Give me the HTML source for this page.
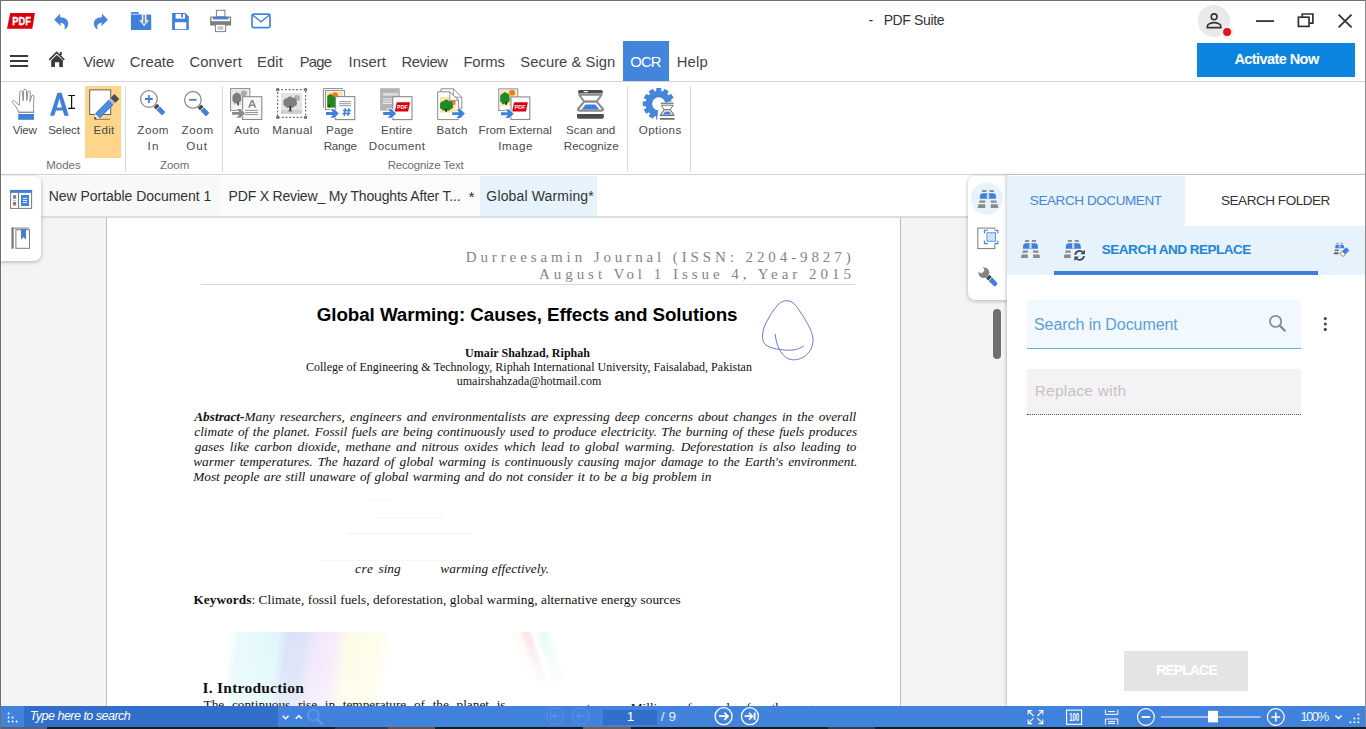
<!DOCTYPE html>
<html>
<head>
<meta charset="utf-8">
<title>PDF Suite</title>
<style>
*{box-sizing:border-box;margin:0;padding:0}
html,body{width:1366px;height:729px;overflow:hidden;background:#fff;font-family:"Liberation Sans",sans-serif;color:#333}
.a{position:absolute;white-space:nowrap}
svg{position:absolute;overflow:visible}
#win{position:absolute;left:0;top:0;width:1366px;height:729px;overflow:hidden;background:#fff}
.hl{position:absolute;height:1px;background:#d4d4d4}
.vl{position:absolute;width:1px;background:#dadada}
.m{color:#444}
.r{color:#4a4a4a}
.g{color:#6e6e6e}
.tb{color:#333}
.w{color:#fff}
.b{font-weight:bold}
.i{font-style:italic}
.ser{font-family:"Liberation Serif",serif;color:#111}
.hd{color:#848484}
.blue{color:#3b7dd8}
</style>
</head>
<body>
<div id="win">

<!-- ===== title bar ===== -->
<div id="titlebar" class="a" style="left:0;top:0;width:1366px;height:41px;background:#fff"></div>
<div class="a tb" style="left:868.45px;top:13.15px;font-size:14px;line-height:14px;">-</div>
<div class="a tb" style="left:883.65px;top:13.15px;font-size:14px;line-height:14px;letter-spacing:-0.362px;">PDF Suite</div>
<!--TITLEICONS_BEGIN-->
<svg style="left:0;top:0" width="1366" height="82" viewBox="0 0 1366 82">
<!-- PDF logo -->
<path d="M10.2,13 H34.9 L32.3,28.8 H7 Z" fill="#d9000d"/>
<text x="12.3" y="24.5" font-family="Liberation Sans" font-weight="bold" font-size="10" fill="#fff" stroke="#fff" stroke-width="0.3" textLength="18.6" lengthAdjust="spacingAndGlyphs">PDF</text>
<!-- undo / redo -->
<path id="undo" d="M54.2,19.8 L60,13.8 L60.3,17.3 C65.5,17.2 68.6,20.4 68.2,24.2 C68,26.6 66.6,28.4 64.3,29.6 C65.7,25.8 64.4,22.9 60.4,22.7 L60.8,26.3 Z" fill="#4585dc"/>
<use href="#undo" transform="translate(162.1,0) scale(-1,1)"/>
<!-- folder -->
<path d="M130.9,12.9 q0,-1 1,-1 h5.6 q1,0 1.4,0.9 l0.3,0.9 h-8.3z" fill="#3e80dc"/>
<path d="M130.9,14.6 h19.3 q1,0 1,1 v13.3 q0,1 -1,1 h-18.3 q-1,0 -1,-1z" fill="#3e80dc"/>
<path d="M141.8,13.6 h4.6 v6.6 h2.6 l-4.9,6 l-4.9,-6 h2.6z" fill="#f2f2f2"/>
<path d="M143.3,14.8 h1.6 v6.8 h1.4 l-2.2,2.9 l-2.2,-2.9 h1.4z" fill="#7f8a96"/>
<!-- save -->
<path d="M172.1,13.1 h13.2 l3.5,3.5 v13.3 h-16.7z" fill="#3e80dc"/>
<rect x="175.6" y="14" width="9.4" height="4.6" fill="#fff"/>
<rect x="181.2" y="14" width="1.8" height="3.4" fill="#3e80dc"/>
<rect x="174.9" y="22.2" width="11.4" height="7" fill="#fff"/>
<!-- printer -->
<rect x="216.4" y="10.3" width="8.5" height="6.5" fill="#fff" stroke="#7e7e7e" stroke-width="1"/>
<path d="M210.1,17.6 q0,-1.1 1.1,-1.1 h18.8 q1.1,0 1.1,1.1 v8 h-21z" fill="#7e7e7e"/>
<rect x="211.4" y="17.6" width="18.4" height="3.6" fill="#fff"/>
<rect x="212.9" y="16.9" width="15.4" height="2.5" fill="#3e80dc"/>
<rect x="215.4" y="24.3" width="10.2" height="7.3" fill="#fff" stroke="#7e7e7e" stroke-width="1"/>
<path d="M217.6,27 h5.8 M217.6,29 h5.8" stroke="#7e7e7e" stroke-width="0.8"/>
<!-- mail -->
<rect x="252" y="14.1" width="18" height="13.5" rx="1.6" fill="none" stroke="#4585dc" stroke-width="1.7"/>
<path d="M252.6,15 L261,21.8 L269.4,15" fill="none" stroke="#4585dc" stroke-width="1.5"/>
<!-- user -->
<circle cx="1214" cy="20.9" r="16" fill="#e9e9e9"/>
<circle cx="1214.1" cy="16.8" r="2.9" fill="none" stroke="#333" stroke-width="1.6"/>
<path d="M1207.3,27.6 v-1.4 c0,-2.4 4.5,-3.6 6.8,-3.6 c2.3,0 6.8,1.2 6.8,3.6 v1.4z" fill="none" stroke="#333" stroke-width="1.6"/>
<circle cx="1227.1" cy="31.9" r="6.3" fill="#f1f1f1"/>
<circle cx="1227.1" cy="31.9" r="4" fill="#e8111b"/>
<!-- window controls -->
<path d="M1256,21.1 h18" stroke="#333" stroke-width="1.8"/>
<rect x="1298.4" y="17.2" width="10.6" height="9.2" fill="none" stroke="#333" stroke-width="1.7"/>
<path d="M1302.3,17 v-3 h10.6 v9.2 h-3.6" fill="none" stroke="#333" stroke-width="1.7"/>
<path d="M1338.6,14.6 l13,12.8 M1351.6,14.6 l-13,12.8" stroke="#333" stroke-width="1.8"/>
<!-- hamburger -->
<path d="M10,56 h18.1 M10,61 h18.1 M10,66.1 h18.1" stroke="#3a3a3a" stroke-width="2"/>
<!-- home -->
<path d="M49.2,59.9 L56.7,52.4 L64.3,59.9" fill="none" stroke="#3a3a3a" stroke-width="1.5"/>
<path d="M51.2,60.2 L56.7,54.9 L62.9,60.2 V67 H59.2 V62.2 H55 V67 H51.2z" fill="#3a3a3a"/>
<rect x="59.9" y="52" width="1.9" height="3" fill="#3a3a3a"/>
</svg>
<!--TITLEICONS_END-->

<!-- ===== menu bar ===== -->
<div class="a" style="left:623px;top:41px;width:46px;height:40px;background:#4485dc"></div>
<div class="a m" style="left:83.25px;top:54.67px;font-size:14.8px;line-height:14.8px;letter-spacing:-0.233px;">View</div>
<div class="a m" style="left:129.85px;top:54.67px;font-size:14.8px;line-height:14.8px;letter-spacing:-0.020px;">Create</div>
<div class="a m" style="left:189.45px;top:54.67px;font-size:14.8px;line-height:14.8px;letter-spacing:0.083px;">Convert</div>
<div class="a m" style="left:257.10px;top:54.67px;font-size:14.8px;line-height:14.8px;letter-spacing:0.067px;">Edit</div>
<div class="a m" style="left:299.65px;top:54.67px;font-size:14.8px;line-height:14.8px;letter-spacing:-0.700px;">Page</div>
<div class="a m" style="left:348.55px;top:54.67px;font-size:14.8px;line-height:14.8px;letter-spacing:0.060px;">Insert</div>
<div class="a m" style="left:401.55px;top:54.67px;font-size:14.8px;line-height:14.8px;letter-spacing:-0.420px;">Review</div>
<div class="a m" style="left:463.45px;top:54.67px;font-size:14.8px;line-height:14.8px;letter-spacing:-0.125px;">Forms</div>
<div class="a m" style="left:520.30px;top:54.67px;font-size:14.8px;line-height:14.8px;letter-spacing:0.033px;">Secure &amp; Sign</div>
<div class="a w" style="left:630.25px;top:54.67px;font-size:14.8px;line-height:14.8px;letter-spacing:-0.850px;">OCR</div>
<div class="a m" style="left:676.65px;top:54.67px;font-size:14.8px;line-height:14.8px;letter-spacing:0.233px;">Help</div>
<div class="a" style="left:1197px;top:43px;width:158px;height:34px;background:#0b84e0"></div>
<div class="a w b" style="left:1234.45px;top:52.23px;font-size:14.5px;line-height:14.5px;letter-spacing:-0.573px;">Activate Now</div>
<div class="hl" style="left:0;top:81px;width:1366px"></div>

<!-- ===== ribbon ===== -->
<div class="a" style="left:85px;top:86px;width:36px;height:72px;background:#fdd68b"></div>
<div class="vl" style="left:125px;top:86px;height:86px"></div>
<div class="vl" style="left:222px;top:86px;height:86px"></div>
<div class="vl" style="left:627px;top:86px;height:86px"></div>
<div class="vl" style="left:690px;top:86px;height:86px"></div>
<div class="a r" style="left:12.65px;top:123.98px;font-size:11.6px;line-height:11.6px;letter-spacing:-0.233px;">View</div>
<div class="a r" style="left:48.15px;top:123.98px;font-size:11.6px;line-height:11.6px;letter-spacing:-0.060px;">Select</div>
<div class="a r" style="left:93.55px;top:123.98px;font-size:11.6px;line-height:11.6px;letter-spacing:0.233px;">Edit</div>
<div class="a r" style="left:137.30px;top:123.98px;font-size:11.6px;line-height:11.6px;letter-spacing:0.533px;">Zoom</div>
<div class="a r" style="left:147.55px;top:140.38px;font-size:11.6px;line-height:11.6px;letter-spacing:1.300px;">In</div>
<div class="a r" style="left:181.50px;top:123.98px;font-size:11.6px;line-height:11.6px;letter-spacing:0.667px;">Zoom</div>
<div class="a r" style="left:186.25px;top:140.38px;font-size:11.6px;line-height:11.6px;letter-spacing:1.050px;">Out</div>
<div class="a r" style="left:234.35px;top:123.98px;font-size:11.6px;line-height:11.6px;letter-spacing:0.433px;">Auto</div>
<div class="a r" style="left:272.25px;top:123.98px;font-size:11.6px;line-height:11.6px;letter-spacing:0.420px;">Manual</div>
<div class="a r" style="left:326.10px;top:123.98px;font-size:11.6px;line-height:11.6px;letter-spacing:0.133px;">Page</div>
<div class="a r" style="left:323.70px;top:140.38px;font-size:11.6px;line-height:11.6px;letter-spacing:-0.250px;">Range</div>
<div class="a r" style="left:381.10px;top:123.98px;font-size:11.6px;line-height:11.6px;letter-spacing:0.160px;">Entire</div>
<div class="a r" style="left:368.85px;top:140.38px;font-size:11.6px;line-height:11.6px;letter-spacing:0.471px;">Document</div>
<div class="a r" style="left:436.55px;top:123.98px;font-size:11.6px;line-height:11.6px;letter-spacing:0.325px;">Batch</div>
<div class="a r" style="left:478.50px;top:123.98px;font-size:11.6px;line-height:11.6px;letter-spacing:0.050px;">From External</div>
<div class="a r" style="left:498.20px;top:140.38px;font-size:11.6px;line-height:11.6px;letter-spacing:0.500px;">Image</div>
<div class="a r" style="left:566.10px;top:123.98px;font-size:11.6px;line-height:11.6px;letter-spacing:0.029px;">Scan and</div>
<div class="a r" style="left:563.80px;top:140.38px;font-size:11.6px;line-height:11.6px;letter-spacing:0.000px;">Recognize</div>
<div class="a r" style="left:638.75px;top:123.98px;font-size:11.6px;line-height:11.6px;letter-spacing:0.417px;">Options</div>
<div class="a g" style="left:46.15px;top:159.87px;font-size:11.5px;line-height:11.5px;letter-spacing:0.025px;">Modes</div>
<div class="a g" style="left:159.95px;top:159.87px;font-size:11.5px;line-height:11.5px;letter-spacing:-0.033px;">Zoom</div>
<div class="a g" style="left:387.65px;top:159.87px;font-size:11.5px;line-height:11.5px;letter-spacing:-0.177px;">Recognize Text</div>
<!--RIBBONICONS_BEGIN-->
<svg style="left:0;top:82px" width="700" height="92" viewBox="0 82 700 92">
<defs>
<path id="barrow" d="M0,-1.45 H6.4 L4,-4.3 H7.7 L11.7,0 L7.7,4.3 H4 L6.4,1.45 H0z" paint-order="stroke"/>
<g id="scan">
<path d="M1.1,3.5 V1.6 Q1.1,0 2.7,0 H24.2 Q25.8,0 25.8,1.6 V3.5z" fill="#4d4d4d"/>
<rect x="6.6" y="1" width="4.4" height="1.2" rx="0.6" fill="#fff"/>
<path d="M2.2,4.9 H24.7 L19.6,11.6 H7.2z" fill="#fff" stroke="#8c8c8c" stroke-width="1.8" stroke-linejoin="round"/>
<path d="M7.2,11.6 H19.6 L25.9,19 Q26.3,20.6 24.6,20.6 H2.3 Q0.6,20.6 1,19z" fill="#fff" stroke="#8c8c8c" stroke-width="2.1" stroke-linejoin="round"/>
<path d="M8.6,14.4 H18.3 L22.3,19.4 H4.6z" fill="#3e80dc"/>
<path d="M0,23.9 H26.8 V27 Q26.8,28.7 25.1,28.7 H1.7 Q0,28.7 0,27z" fill="#4d4d4d"/>
</g>
<g id="pdfb"><path d="M1.9,0 H15.2 L13.3,9.2 H0z" fill="#d9000d"/><text x="2.3" y="6.7" font-family="Liberation Sans" font-weight="bold" font-size="5.6" fill="#fff" textLength="10.6" lengthAdjust="spacingAndGlyphs">PDF</text></g>
<path id="tree" d="M0,6 C-1,3 1,0.5 3.4,0.8 C4.5,-1.2 7.6,-1.4 8.8,0.4 C11.4,0 13.4,2.2 12.6,4.6 C14,6.4 12.8,9.2 10.4,9.2 C9.6,10.8 7.6,11.2 6.4,10.4 C4.6,11.6 2,10.8 1.6,9 C0,8.8 -0.8,7.2 0,6z"/>
</defs>
<!-- hand (View) -->
<path d="M18.6,112.2 C17.8,108.6 14.2,104.6 12.4,102.6 C11.6,101.4 13,100.2 14.4,101 L19.3,105.2 L19.8,92.2 C19.9,90.4 22.2,90.4 22.4,92.2 L23.2,100.6 L23.6,90.6 C23.7,88.7 26.3,88.7 26.4,90.6 L26.8,100.6 L27.8,92.2 C28,90.4 30.4,90.6 30.3,92.4 L30,101.6 L31.6,96 C32.1,94.4 34.2,94.8 34,96.6 C33.4,101.4 33.6,107.6 33.6,112.2z" fill="#fff" stroke="#8e8e8e" stroke-width="1" stroke-linejoin="round"/>
<path d="M18.2,112.4 H34" stroke="#8a8a8a" stroke-width="0.9"/>
<rect x="18.2" y="114" width="15.8" height="5.8" fill="#3e80dc"/>
<!-- A + I-beam (Select) -->
<path fill-rule="evenodd" d="M50,115.8 L57.5,92.8 H61.6 L68.8,115.8 H64.4 L62.8,110.6 H55.9 L54.3,115.8z M56.9,107.4 H61.8 L59.4,98.6z" fill="#3e80dc"/>
<path d="M68.2,95.5 H75 M68.2,108.4 H75 M71.6,95.5 V108.4" stroke="#111" stroke-width="1.2" fill="none"/>
<!-- Edit -->
<rect x="89.7" y="89.9" width="21" height="24.6" fill="#fff" stroke="#5f5f5f" stroke-width="1"/>
<path d="M94.3,119.3 H110.2" stroke="#5f5f5f" stroke-width="0.8"/>
<g transform="translate(94.2,119.1) rotate(-45)">
<path d="M0,0 L4.6,-3.4 V3.4z" fill="#f3e9d8"/>
<path d="M0,0 L2.2,-1.6 V1.6z" fill="#333"/>
<rect x="4.6" y="-3.4" width="19.2" height="6.8" fill="#3e80dc"/>
<path d="M5,-1.2 H23.6 M5,1.2 H23.6" stroke="#a9c8f2" stroke-width="0.5"/>
<rect x="23.8" y="-3.4" width="2.8" height="6.8" fill="#b9b9b9"/>
<rect x="26.6" y="-3.4" width="5.4" height="6.8" fill="#4d4d4d"/>
</g>
<!-- Zoom in / out -->
<g id="mag" transform="translate(148.9,99) rotate(45)">
<rect x="9.2" y="-2.45" width="3.3" height="4.9" fill="#444"/>
<path d="M13.2,-2.45 H20 Q21,-2.45 21,-1.45 V1.45 Q21,2.45 20,2.45 H13.2z" fill="#3e80dc"/>
</g>
<circle cx="148.9" cy="99" r="8.3" fill="#fff" stroke="#8c8c8c" stroke-width="1.3"/>
<path d="M145,99 H152.8 M148.9,95.1 V102.9" stroke="#3e80dc" stroke-width="1.8"/>
<use href="#mag" transform="translate(44,0.8)"/>
<circle cx="192.9" cy="99.8" r="8.3" fill="#fff" stroke="#8c8c8c" stroke-width="1.3"/>
<path d="M189.1,99.8 H196.7" stroke="#3e80dc" stroke-width="1.8"/>
<!-- Auto -->
<rect x="230.6" y="88.6" width="19.2" height="22" fill="#f4f4f4" stroke="#8a8a8a" stroke-width="1"/>
<rect x="232.2" y="90.2" width="16" height="14.5" fill="#e3e3e3"/>
<circle cx="243.9" cy="93.3" r="2.9" fill="#a9a9a9"/>
<use href="#tree" transform="translate(232.6,93.2) scale(0.66,0.95)" fill="#7b7b7b"/>
<rect x="237.4" y="102.4" width="1.4" height="3" fill="#333"/>
<rect x="242.6" y="96.7" width="19.2" height="22.8" fill="#f8f8f8" stroke="#8a8a8a" stroke-width="1.1"/>
<path fill-rule="evenodd" d="M248,107.7 L251.2,100.1 H253.2 L256.4,107.7 H254.6 L253.9,105.9 H250.5 L249.8,107.7z M251,104.5 H253.4 L252.2,101.7z" fill="#8a8a8a"/>
<path d="M245.1,110.4 H258 M245.1,112.5 H258 M245.1,114.5 H258" stroke="#8a8a8a" stroke-width="0.9"/>
<use href="#barrow" transform="translate(232.1,113.4) scale(1.11,1)" fill="#8a8a8a" stroke="#fff" stroke-width="1.3"/>
<!-- Manual -->
<rect x="277.6" y="89.6" width="28" height="27.8" fill="#fff" stroke="#6e6e6e" stroke-width="1.2" stroke-dasharray="1.9,1.8"/>
<rect x="276.1" y="88.1" width="3" height="3" fill="#7a7a7a"/><rect x="304.1" y="88.1" width="3" height="3" fill="#7a7a7a"/>
<rect x="276.1" y="115.9" width="3" height="3" fill="#7a7a7a"/><rect x="304.1" y="115.9" width="3" height="3" fill="#7a7a7a"/>
<rect x="281" y="92.9" width="20.9" height="20.9" fill="#e4e4e4"/>
<rect x="281" y="110" width="20.9" height="3.8" fill="#cfcfcf"/>
<circle cx="297" cy="98" r="3" fill="#b3b3b3"/>
<use href="#tree" transform="translate(283.6,97.4) scale(1.02,0.95)" fill="#7e7e7e"/>
<path d="M289.6,106 h1.4 l0.3,4.4 l1.6,0.9 h-5.2 l1.6,-0.9z" fill="#333"/>
<!-- Page Range -->
<path d="M323.4,107.8 V88.6 H343" fill="none" stroke="#8a8a8a" stroke-width="1"/>
<rect x="325.4" y="90.6" width="19.2" height="19" fill="#fff" stroke="#8a8a8a" stroke-width="1"/>
<rect x="326.9" y="92" width="16.3" height="15.8" fill="#fbe3a4"/>
<circle cx="335" cy="95.2" r="3" fill="#f07a26"/>
<path d="M327.2,107.4 V96 L330.4,93.8 L336.2,98.6 V107.4z" fill="#1f8a22"/>
<rect x="328.6" y="104.6" width="1.3" height="2.8" fill="#222"/>
<rect x="335.6" y="96.6" width="19.2" height="23" fill="#fff" stroke="#8a8a8a" stroke-width="1.1"/>
<path d="M339.1,101.6 H350.9 M339.1,103.7 H350.9 M339.1,105.7 H350.9" stroke="#8a8a8a" stroke-width="0.9"/>
<path d="M345.4,108.2 L344.2,115.8 M349,108.2 L347.8,115.8 M342.9,110.6 H350.9 M342.4,113.4 H350.4" stroke="#3e80dc" stroke-width="1.5"/>
<use href="#barrow" transform="translate(326,113.5) scale(1.09,1)" fill="#3e80dc" stroke="#fff" stroke-width="1.3"/>
<!-- Entire Document -->
<rect x="380.1" y="88.2" width="19.7" height="22.5" fill="#b3b3b3"/>
<rect x="382.8" y="92.8" width="15.4" height="2.9" fill="#e6e6e6"/>
<path d="M382.8,93.5 H398.2 M382.8,94.9 H398.2" stroke="#b3b3b3" stroke-width="0.5" stroke-dasharray="0.8,0.8"/>
<path d="M382.8,99 H392 M382.8,101.2 H392 M382.8,103.4 H392" stroke="#f2f2f2" stroke-width="1"/>
<rect x="392.8" y="96.7" width="19.2" height="22.9" fill="#fff" stroke="#8a8a8a" stroke-width="1.1"/>
<use href="#pdfb" transform="translate(394.8,102.3)"/>
<use href="#barrow" transform="translate(383.2,113.5) scale(1.1,1)" fill="#3e80dc" stroke="#fff" stroke-width="1.3"/>
<!-- Batch -->
<path d="M441,108.2 V88.8 H453.4 L461.8,97.2 V108.2z" fill="#fff" stroke="#8a8a8a" stroke-width="1"/>
<path d="M453.4,88.8 V97.2 H461.8" fill="none" stroke="#8a8a8a" stroke-width="0.9"/>
<path d="M437.7,119.6 V91.8 H449.8 L458.6,100.4 V119.6z" fill="#fff" stroke="#8a8a8a" stroke-width="1"/>
<rect x="440" y="96.9" width="15.8" height="15.7" fill="#fbe3a4"/>
<circle cx="453" cy="102.4" r="2.6" fill="#f07a26"/>
<path d="M449.8,91.8 V100.4 H458.6z" fill="#fff" stroke="#8a8a8a" stroke-width="0.9" stroke-linejoin="round"/>
<use href="#tree" transform="translate(440.2,100.6) scale(0.98,0.93)" fill="#1f8a22"/>
<rect x="445.5" y="108.6" width="1.4" height="3.4" fill="#222"/>
<use href="#barrow" transform="translate(452.1,113.6) scale(1.09,1)" fill="#3e80dc" stroke="#fff" stroke-width="1.3"/>
<!-- From External Image -->
<rect x="498.8" y="88.9" width="19" height="21.7" fill="#fff" stroke="#8a8a8a" stroke-width="1"/>
<rect x="500.2" y="90.2" width="16.3" height="15.5" fill="#fbe3a4"/>
<circle cx="512.1" cy="92.7" r="2.9" fill="#f07a26"/>
<use href="#tree" transform="translate(500.3,93) scale(0.72,1.02)" fill="#1f8a22"/>
<rect x="505.4" y="101.8" width="1.3" height="3.2" fill="#222"/>
<rect x="511" y="96.9" width="18.8" height="22.6" fill="#fff" stroke="#8a8a8a" stroke-width="1.1"/>
<use href="#pdfb" transform="translate(512.2,102.3) scale(1.03,0.99)"/>
<use href="#barrow" transform="translate(501,113.7) scale(1.09,1)" fill="#3e80dc" stroke="#fff" stroke-width="1.3"/>
<!-- Scan and Recognize -->
<use href="#scan" transform="translate(577,90)"/>
<!-- Options -->
<g transform="translate(658.7,103.8)">
<g fill="#4585dc">
<path fill-rule="evenodd" d="M13.1,0 A13.1,13.1 0 1 1 -13.1,0 A13.1,13.1 0 1 1 13.1,0z M6.6,0 A6.6,6.6 0 1 0 -6.6,0 A6.6,6.6 0 1 0 6.6,0z"/>
<g id="tooth"><rect x="-2.5" y="-15.9" width="5" height="4.2" rx="0.6"/></g>
<use href="#tooth" transform="rotate(30)"/><use href="#tooth" transform="rotate(60)"/><use href="#tooth" transform="rotate(90)"/>
<use href="#tooth" transform="rotate(120)"/><use href="#tooth" transform="rotate(150)"/><use href="#tooth" transform="rotate(180)"/>
<use href="#tooth" transform="rotate(210)"/><use href="#tooth" transform="rotate(240)"/><use href="#tooth" transform="rotate(270)"/>
<use href="#tooth" transform="rotate(300)"/><use href="#tooth" transform="rotate(330)"/>
</g>
<path d="M0,0 L17,-3.4 L17,17 L-1.6,17z" fill="#fff"/>
</g>
<g transform="translate(659.4,102.8)">
<path d="M1.4,0.4 H14.2" stroke="#4d4d4d" stroke-width="1"/>
<path d="M1.8,2.4 H13.8 L10.8,7 H4.8z" fill="#fff" stroke="#6e6e6e" stroke-width="1" stroke-linejoin="round"/>
<path d="M4.8,7 H10.8 L14.6,12.6 H1z" fill="#fff" stroke="#6e6e6e" stroke-width="1.1" stroke-linejoin="round"/>
<path d="M5.7,8.8 H9.9 L12,11.8 H3.6z" fill="#3e80dc"/>
<path d="M0.4,15.4 H15.2 V16.8 H0.4z" fill="#4d4d4d"/>
</g>
</svg>
<!--RIBBONICONS_END-->
<div class="hl" style="left:0;top:174px;width:1366px"></div>

<!-- ===== workspace ===== -->
<div id="work" class="a" style="left:0;top:175px;width:1007px;height:531px;background:#f5f3f5"></div>
<div id="tabs" class="a" style="left:0;top:175px;width:1007px;height:41px;background:#fff"></div>
<div class="a" style="left:41px;top:176px;width:179px;height:40px;background:#f8f8f8"></div>
<div class="a" style="left:220px;top:176px;width:260px;height:40px;background:#fbfbfb"></div>
<div class="a" style="left:480px;top:176px;width:117px;height:40px;background:#e6f2fc"></div>
<div class="a tb" style="left:48.80px;top:189.05px;font-size:14px;line-height:14px;letter-spacing:-0.045px;">New Portable Document 1</div>
<div class="a tb" style="left:228.55px;top:189.05px;font-size:14px;line-height:14px;letter-spacing:-0.180px;">PDF X Review_ My Thoughts After T...</div>
<div class="a tb" style="left:468.60px;top:189.48px;font-size:15.5px;line-height:15.5px;">*</div>
<div class="a tb" style="left:486.35px;top:189.05px;font-size:14px;line-height:14px;letter-spacing:0.150px;">Global Warming*</div>
<div class="hl" style="left:0;top:216px;width:1007px;background:#dcdcdc;height:2px"></div>

<!-- page -->
<div id="page" class="a" style="left:106px;top:218px;width:795px;height:488px;background:#fff;border-left:1px solid #bdbdbd;border-right:1px solid #bdbdbd"></div>
<!--PAGEART_BEGIN-->
<div class="a" style="left:228px;top:632px;width:160px;height:74px;background:linear-gradient(97deg,rgba(255,255,255,0) 0px,#e8fafc 12px,#e0f8fb 50px,#d9e2f8 60px,#dce3f9 76px,#efe7fa 87px,#f8ecfb 108px,#fdfce6 120px,#fefde9 150px,rgba(255,255,255,0) 164px)"></div>
<div class="a" style="left:505px;top:632px;width:70px;height:60px;overflow:hidden;-webkit-mask-image:linear-gradient(180deg,#000 10%,transparent 92%);mask-image:linear-gradient(180deg,#000 10%,transparent 92%)"><div class="a" style="left:5px;top:0;width:10px;height:60px;background:linear-gradient(90deg,rgba(255,255,255,0),#fefaf0 50%,rgba(255,255,255,0));transform:skewX(18deg);transform-origin:0 0"></div><div class="a" style="left:13px;top:0;width:15px;height:60px;background:linear-gradient(90deg,rgba(255,255,255,0),#fce9eb 35%,#fbe5e8 65%,rgba(255,255,255,0));transform:skewX(18deg);transform-origin:0 0"></div><div class="a" style="left:28px;top:0;width:19px;height:60px;background:linear-gradient(90deg,rgba(255,255,255,0),#e8fbf5 35%,#ebfbf8 65%,rgba(255,255,255,0));transform:skewX(18deg);transform-origin:0 0"></div></div>
<div class="a" style="left:200px;top:632px;width:300px;height:74px;background:linear-gradient(180deg,rgba(255,255,255,0) 0%,rgba(255,255,255,.12) 50%,rgba(255,255,255,.3) 100%)"></div>
<div class="a" style="left:370px;top:499px;width:21px;height:1px;background:#f6f6f6"></div>
<div class="a" style="left:376px;top:517px;width:68px;height:1px;background:#f5f5f5"></div>
<div class="a" style="left:348px;top:533px;width:124px;height:1px;background:#f4f4f4"></div>
<div class="a" style="left:320px;top:560px;width:180px;height:1px;background:#f5f5f5"></div>
<svg style="left:750px;top:290px" width="80" height="80" viewBox="750 290 80 80"><path d="M775.1,333.9 C775.6,338 776.4,342 777.9,346 C780,351.5 783.6,356.6 788,358.6 C793.4,361 800,359.6 804.6,356.4 C809.6,353 812.6,347.4 813,341.4 C813.4,335.4 810.6,329.4 807.6,323.8 C804.8,318.6 801.8,314 798.6,309.4 C796.2,305.8 793.4,301.8 789,300.9 C785,300.1 781,301.6 778,304.8 C773.4,309.6 769.8,315.6 766.6,321.8 C764.4,326.2 762.6,331 762.5,336 C762.4,339.4 763.2,343 766.2,345.2 C770,348 775.4,348.9 780.6,349.6 C785.6,350.3 790.6,350.5 795.4,349.6 C798.4,349 801.2,347.6 803.8,345.9" fill="none" stroke="#5a68cf" stroke-width="0.9"/></svg>
<!--PAGEART_END-->
<div class="a ser hd" style="left:465.70px;top:250.24px;font-size:15px;line-height:15px;letter-spacing:3.900px;">Durreesamin Journal (ISSN: 2204-9827)</div>
<div class="a ser hd" style="left:538.90px;top:266.74px;font-size:15px;line-height:15px;letter-spacing:3.973px;">August Vol 1 Issue 4, Year 2015</div>
<div class="hl" style="left:201px;top:284px;width:654px;background:#d9d9d9"></div>
<div class="a b" style="left:316.75px;top:305.89px;font-size:18.8px;line-height:18.8px;letter-spacing:-0.075px;color:#000">Global Warming: Causes, Effects and Solutions</div>
<div class="a ser b" style="left:465.10px;top:347.15px;font-size:12px;line-height:12px;letter-spacing:0.040px;">Umair Shahzad, Riphah</div>
<div class="a ser" style="left:305.95px;top:361.25px;font-size:12px;line-height:12px;letter-spacing:0.015px;">College of Engineering &amp; Technology, Riphah International University, Faisalabad, Pakistan</div>
<div class="a ser" style="left:456.65px;top:374.75px;font-size:12px;line-height:12px;letter-spacing:0.054px;">umairshahzada@hotmail.com</div>
<div class="a ser i ws" style="left:194.25px;top:409.66px;font-size:13.3px;line-height:13.3px;word-spacing:1.746px;"><b>Abstract-</b>Many researchers, engineers and environmentalists are expressing deep concerns about changes in the overall</div>
<div class="a ser i ws" style="left:194.25px;top:425.16px;font-size:13.3px;line-height:13.3px;word-spacing:1.206px;">climate of the planet. Fossil fuels are being continuously used to produce electricity. The burning of these fuels produces</div>
<div class="a ser i ws" style="left:194.75px;top:439.96px;font-size:13.3px;line-height:13.3px;word-spacing:2.159px;">gases like carbon dioxide, methane and nitrous oxides which lead to global warming. Deforestation is also leading to</div>
<div class="a ser i ws" style="left:193.25px;top:455.46px;font-size:13.3px;line-height:13.3px;word-spacing:1.713px;">warmer temperatures. The hazard of global warming is continuously causing major damage to the Earth's environment.</div>
<div class="a ser i ws" style="left:193.20px;top:470.26px;font-size:13.3px;line-height:13.3px;word-spacing:0.967px;">Most people are still unaware of global warming and do not consider it to be a big problem in</div>
<div class="a ser i" style="left:355.05px;top:562.26px;font-size:13.3px;line-height:13.3px;letter-spacing:0.650px;">cre</div>
<div class="a ser i" style="left:378.50px;top:562.26px;font-size:13.3px;line-height:13.3px;letter-spacing:0.000px;">sing</div>
<div class="a ser i" style="left:440.30px;top:562.26px;font-size:13.3px;line-height:13.3px;letter-spacing:0.095px;">warming effectively.</div>
<div class="a ser" style="left:193.45px;top:592.96px;font-size:13.3px;line-height:13.3px;letter-spacing:0.046px;"><b>Keywords</b>: Climate, fossil fuels, deforestation, global warming, alternative energy sources</div>
<div class="a ser b" style="left:202.55px;top:679.92px;font-size:15.5px;line-height:15.5px;letter-spacing:0.236px;">I. Introduction</div>
<div class="a ser ws" style="left:203.60px;top:698.36px;font-size:13.3px;line-height:13.3px;word-spacing:4.325px;">The continuous rise in temperature of the planet is</div>
<div class="a ser ws" style="left:630.70px;top:700.66px;font-size:13.3px;line-height:13.3px;word-spacing:1.450px;">Millions of pounds of methane</div>
<div class="a ser ws" style="left:807.00px;top:700.66px;font-size:13.3px;line-height:13.3px;word-spacing:11.000px;">gas are</div>
<div class="a ser ws" style="left:566.00px;top:700.66px;font-size:13.3px;line-height:13.3px;word-spacing:-20.000px;">waste sources.</div>

<!-- left float panel -->
<div class="a" style="left:0;top:176px;width:41px;height:85px;background:#fff;border-radius:0 7px 7px 0;box-shadow:0 1px 4px rgba(0,0,0,.28)"></div>


<!-- right float toolbar + scrollbar -->
<div class="a" style="left:968px;top:176px;width:45px;height:124px;background:#fff;border-radius:7px 0 0 7px;box-shadow:0 1px 4px rgba(0,0,0,.28)"></div>
<div class="a" style="left:993px;top:309px;width:8px;height:50px;background:#6f6f6f;border-radius:4px"></div>
<!--RTOOLICONS-->


<!-- ===== right panel ===== -->
<div id="rpanel" class="a" style="left:1007px;top:175px;width:359px;height:531px;background:#fff;box-shadow:-1px 0 3px rgba(0,0,0,.22)"></div>
<div class="a" style="left:1007px;top:176px;width:178px;height:50px;background:#e6f2fc"></div>
<div class="a" style="left:1007px;top:226px;width:359px;height:49px;background:#e6f2fc"></div>
<div class="a" style="left:1054px;top:271px;width:264px;height:4px;background:#3e80dc"></div>
<div class="a " style="left:1029.80px;top:193.87px;font-size:13.5px;line-height:13.5px;letter-spacing:-0.414px;color:#4a86d6">SEARCH DOCUMENT</div>
<div class="a tb" style="left:1221.00px;top:193.87px;font-size:13.5px;line-height:13.5px;letter-spacing:-0.450px;">SEARCH FOLDER</div>
<div class="a b" style="left:1101.80px;top:243.17px;font-size:13.5px;line-height:13.5px;letter-spacing:-0.482px;color:#2085da">SEARCH AND REPLACE</div>
<!--PANELICONS-->
<div class="a" style="left:1027px;top:300px;width:274px;height:49px;background:#f1f8fe;border-bottom:1px solid #6ea9dc"></div>
<div class="a " style="left:1034.00px;top:317.46px;font-size:16px;line-height:16px;letter-spacing:-0.071px;color:#5d9fd6">Search in Document</div>
<div class="a" style="left:1027px;top:369px;width:274px;height:46px;background:#f4f2f4;border-bottom:1px dotted #555"></div>
<div class="a " style="left:1034.65px;top:382.68px;font-size:15.5px;line-height:15.5px;letter-spacing:0.245px;color:#c3c3c3">Replace with</div>
<div class="a" style="left:1124px;top:651px;width:124px;height:40px;background:#e4e3e5"></div>
<div class="a w b" style="left:1156.15px;top:663.35px;font-size:14px;line-height:14px;letter-spacing:-0.917px;">REPLACE</div>


<!--WORKICONS_BEGIN-->
<svg style="left:0;top:175px" width="1366" height="531" viewBox="0 175 1366 531">
<defs>
<g id="bino">
<rect x="4.1" y="0" width="4.1" height="1.9" fill="#8a8a8a"/><rect x="11" y="0" width="4.1" height="1.9" fill="#8a8a8a"/>
<path d="M2.1,8.8 V6.4 Q2.4,3.2 5,3.2 H8.4 Q9.2,3.2 9.2,4.2 V8.8z" fill="#3e80dc"/>
<path d="M17.1,8.8 V6.4 Q16.8,3.2 14.2,3.2 H10.8 Q10,3.2 10,4.2 V8.8z" fill="#3e80dc"/>
<ellipse cx="9.6" cy="6" rx="1.3" ry="1.9" fill="#fff"/><ellipse cx="9.6" cy="6" rx="0.45" ry="1" fill="#3e80dc"/>
<path d="M1.9,10.4 H7 V12.7 H1.4z" fill="#8a8a8a"/><path d="M0.7,14.4 H7 V18 H0z" fill="#8a8a8a"/>
</g>
<g id="binoR">
<path d="M12.2,10.4 H17.3 L17.8,12.7 H12.2z" fill="#8a8a8a"/><path d="M12.2,14.4 H18.5 L19.2,18 H12.2z" fill="#8a8a8a"/>
</g>
</defs>
<!-- left panel icons -->
<rect x="10.6" y="190.4" width="21" height="18" fill="#fff" stroke="#7a7a7a" stroke-width="1"/>
<rect x="10.1" y="190" width="22" height="2.9" fill="#3e80dc"/>
<path d="M18.5,192.9 V208.4" stroke="#7a7a7a" stroke-width="1"/>
<rect x="13" y="195.2" width="3.2" height="3.5" fill="#7f7f7f"/><rect x="13" y="202" width="3.2" height="3.5" fill="#7f7f7f"/>
<path d="M13,200.4 H16.2" stroke="#9a9a9a" stroke-width="0.7"/>
<rect x="21" y="195" width="8" height="11" fill="#3e80dc"/>
<path d="M22.8,198.4 H27.2 M22.8,200.5 H27.2 M22.8,202.6 H27.2" stroke="#fff" stroke-width="0.9"/>
<path d="M11.4,228.1 H29" stroke="#7a7a7a" stroke-width="1"/>
<rect x="11.4" y="227.7" width="2.3" height="21" fill="#7a7a7a"/>
<rect x="15.9" y="229.7" width="13.6" height="18.6" fill="#fff" stroke="#7a7a7a" stroke-width="1"/>
<path d="M21,229.2 H26 V239.6 L23.5,237.2 L21,239.6z" fill="#3e80dc"/>
<!-- right tool icons -->
<circle cx="986.8" cy="198.6" r="16" fill="#e6f2fc"/>
<use href="#bino" transform="translate(977.6,190.1) scale(1.08,0.99)"/><use href="#binoR" transform="translate(977.6,190.1) scale(1.08,0.99)"/>
<rect x="977.8" y="228.1" width="17" height="20.5" fill="#fff" stroke="#7a7a7a" stroke-width="1"/>
<rect x="983.4" y="229.2" width="15" height="15.4" fill="#fff"/>
<path d="M984.4,233.4 V230.2 H987.8 M994.4,230.2 H997.8 V233.4 M997.8,240.4 V243.6 H994.4 M987.8,243.6 H984.4 V240.4" fill="none" stroke="#3e80dc" stroke-width="1.1"/>
<rect x="987" y="232.8" width="8.4" height="8.4" fill="#eaf2fd" stroke="#3e80dc" stroke-width="0.9"/>
<path d="M988,237.4 L992,233.6 M988.4,240.2 L994.6,234 M991,240.6 L995,236.6" stroke="#6b9fe6" stroke-width="0.6"/>
<g transform="translate(983.8,272.6) rotate(45)">
<circle cx="0" cy="0" r="5.4" fill="#858585"/><circle cx="-3.9" cy="0" r="3.1" fill="#fff"/>
<rect x="5.6" y="-2.5" width="3.2" height="5" fill="#444"/>
<path d="M9.4,-2.4 H15.6 A2.4,2.4 0 0 1 15.6,2.4 H9.4z" fill="#3e80dc"/>
</g>
<!-- panel icons -->
<use href="#bino" transform="translate(1020.9,240)"/><use href="#binoR" transform="translate(1020.9,240)"/>
<use href="#bino" transform="translate(1063.7,240)"/>
<g transform="translate(1079.6,255.4)" fill="none" stroke="#37474f" stroke-width="1.8">
<path d="M-4.4,-0.6 A4.5,4.5 0 0 1 3.3,-3.1"/><path d="M4.4,0.6 A4.5,4.5 0 0 1 -3.3,3.1"/>
<path d="M5.2,-5.6 V-1.2 H0.8z" fill="#37474f" stroke="none"/><path d="M-5.2,5.6 V1.2 H-0.8z" fill="#37474f" stroke="none"/>
</g>
<g transform="translate(1333.7,242.8) scale(0.62)">
<rect x="4.1" y="0" width="4.1" height="1.5" fill="#8a8a8a"/><rect x="11" y="0" width="4.1" height="1.5" fill="#8a8a8a"/>
<path d="M2.1,8.8 L3.4,3.2 H15.8 L17.1,8.8z" fill="#3e80dc"/><circle cx="9.6" cy="6" r="1.7" fill="#fff"/><circle cx="9.6" cy="6" r="0.7" fill="#3e80dc"/>
<path d="M1.9,10.8 H8 V13.4 H1.4z" fill="#666"/><path d="M0.7,15.4 H8 V18.4 H0z" fill="#666"/>
</g>
<g transform="translate(1345.6,251.4) rotate(-45)">
<rect x="-2.2" y="-2.6" width="5.6" height="4.6" fill="#3e80dc"/><rect x="-5.6" y="-2.6" width="3.4" height="4.6" rx="1" fill="#fff" stroke="#666" stroke-width="0.8"/>
</g>
<!-- search icon + kebab -->
<circle cx="1275.6" cy="321.4" r="5.6" fill="none" stroke="#8a8a8a" stroke-width="1.7"/>
<path d="M1279.7,325.6 L1285.4,331.3" stroke="#8a8a8a" stroke-width="2.3"/>
<circle cx="1325.3" cy="318.6" r="1.55" fill="#444"/><circle cx="1325.3" cy="324" r="1.55" fill="#444"/><circle cx="1325.3" cy="329.4" r="1.55" fill="#444"/>
</svg>
<!--WORKICONS_END-->

<!-- ===== status bar ===== -->
<div id="status" class="a" style="left:0;top:706px;width:1366px;height:21px;background:#4182dc"></div>
<div class="a" style="left:24px;top:706px;width:254px;height:21px;background:#316fca"></div>
<div class="a" style="left:603px;top:710px;width:54px;height:15px;background:#316fca"></div>
<div class="a w i" style="left:29.65px;top:709.72px;font-size:12.5px;line-height:12.5px;letter-spacing:-0.506px;">Type here to search</div>
<div class="a w" style="left:626.75px;top:709.57px;font-size:13.5px;line-height:13.5px;">1</div>
<div class="a w" style="left:660.85px;top:709.57px;font-size:13.5px;line-height:13.5px;letter-spacing:0.050px;color:#e8f0fb">/ 9</div>
<div class="a w" style="left:1300.30px;top:710.07px;font-size:13.5px;line-height:13.5px;letter-spacing:-1.867px;color:#eef4fc">100%</div>
<!--STATUSICONS_BEGIN-->
<svg style="left:0;top:706px" width="1366" height="21" viewBox="0 706 1366 21">
<g fill="#fff">
<!-- left grip -->
<circle cx="8.6" cy="713.6" r="1"/><circle cx="8.6" cy="717.6" r="1"/><circle cx="12.6" cy="717.6" r="1"/><circle cx="8.6" cy="721.6" r="1"/><circle cx="12.6" cy="721.6" r="1"/><circle cx="16.6" cy="721.6" r="1"/>
<!-- right grip -->
<circle cx="1358.4" cy="714.6" r="1"/><circle cx="1354.4" cy="718.4" r="1"/><circle cx="1358.4" cy="718.4" r="1"/><circle cx="1350.4" cy="722.2" r="1"/><circle cx="1354.4" cy="722.2" r="1"/><circle cx="1358.4" cy="722.2" r="1"/>
</g>
<g fill="none" stroke="#fff" stroke-width="1.5">
<path d="M282.6,715.8 L285.6,718.8 L288.6,715.8"/><path d="M295.8,718.8 L298.8,715.8 L301.8,718.8"/>
<path d="M1335.4,715.4 L1338.5,718.6 L1341.6,715.4" stroke-width="1.4"/>
</g>
<!-- faded search -->
<circle cx="313.3" cy="715.2" r="5.4" fill="none" stroke="#6696e6" stroke-width="1.5"/><path d="M317.2,719.2 L322.8,724.8" stroke="#6696e6" stroke-width="2"/>
<!-- nav: first, prev (faded) -->
<g fill="none" stroke="#5d92e3" stroke-width="1">
<circle cx="554.9" cy="716.2" r="8.3"/><circle cx="580.8" cy="716.2" r="8.3"/>
<path d="M550.6,712.8 V719.6 M552.6,716.2 H559.6 M555.4,713.4 L552.6,716.2 L555.4,719" stroke-width="1.3"/>
<path d="M577,716.2 H584.8 M580,713.2 L577,716.2 L580,719.2" stroke-width="1.3"/>
</g>
<!-- nav: next, last -->
<g fill="none" stroke="#fff" stroke-width="1.3">
<circle cx="723.6" cy="716.2" r="8.5"/><circle cx="749.9" cy="716.2" r="8.5"/>
<path d="M719,716.2 H727.6 M724.4,712.6 L728,716.2 L724.4,719.8" stroke-width="1.7"/>
<path d="M744.6,716.2 H752 M749,712.8 L752.4,716.2 L749,719.6" stroke-width="1.7"/><path d="M754.6,712.6 V719.8" stroke-width="1.9"/>
</g>
<!-- expand -->
<g fill="none" stroke="#fff" stroke-width="1.1">
<path d="M1028.2,710.6 L1033.6,716 M1028.2,714.6 V710.6 H1032.2"/>
<path d="M1042.8,710.6 L1037.4,716 M1038.8,710.6 H1042.8 V714.6"/>
<path d="M1028.2,723.6 L1033.6,718.2 M1028.2,719.6 V723.6 H1032.2"/>
<path d="M1042.8,723.6 L1037.4,718.2 M1038.8,723.6 H1042.8 V719.6"/>
<!-- 100 box -->
<rect x="1066.6" y="710.1" width="15" height="14.2"/>
<!-- fit width -->
<path d="M1105.4,709.8 V714.4 H1117.8 V709.8 M1105.4,724.6 V719 H1117.8 V724.6 M1108,711.6 H1115.2 M1108,721.6 H1115.2 M1108,723.4 H1115.2" stroke-width="1"/>
<!-- zoom slider -->
<circle cx="1145.9" cy="717" r="8.4" stroke-width="1.2"/><path d="M1141.6,717 H1150.2" stroke-width="1.8"/>
<path d="M1160.8,717 H1260.6" stroke-width="1"/>
<circle cx="1275.8" cy="717" r="8.4" stroke-width="1.2"/><path d="M1271.4,717 H1280.2 M1275.8,712.6 V721.4" stroke-width="1.6"/>
</g>
<rect x="1208" y="710.8" width="10" height="11.6" fill="#fff"/>
<text x="1069.2" y="721.2" font-family="Liberation Sans" font-weight="bold" font-size="10" fill="#fff" textLength="10" lengthAdjust="spacingAndGlyphs">100</text>
</svg>
<!--STATUSICONS_END-->
<div class="a" style="left:0;top:727px;width:1366px;height:2px;background:#1b1b22"></div>
<div class="a" style="left:0;top:727px;width:47px;height:2px;background:#5a6072"></div>
<div class="a" style="left:335px;top:727px;width:53px;height:2px;background:#3b3a42"></div>
<div class="a" style="left:388px;top:727px;width:47px;height:2px;background:#6b5046"></div>
<div class="a" style="left:583px;top:727px;width:48px;height:2px;background:#7a5a48"></div>
<div class="a" style="left:828px;top:727px;width:47px;height:2px;background:#3c3c46"></div>


<!-- window border -->
<div class="a" style="left:0;top:0;width:1366px;height:1px;background:#707070"></div>
<div class="a" style="left:0;top:0;width:1px;height:729px;background:#707070"></div>
<div class="a" style="left:1365px;top:0;width:1px;height:727px;background:#8a8a8a"></div>
</div>
</body>
</html>
